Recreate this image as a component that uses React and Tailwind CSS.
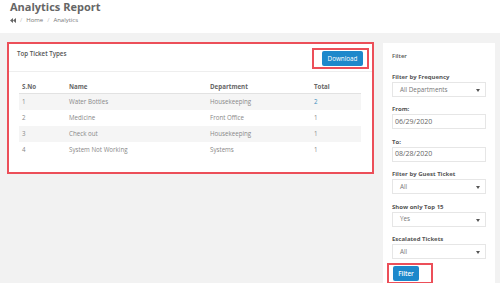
const rows = [
  { no: 1, name: "Water Bottles", dept: "Housekeeping", total: 2, link: true },
  { no: 2, name: "Medicine", dept: "Front Office", total: 1 },
  { no: 3, name: "Check out", dept: "Housekeeping", total: 1 },
  { no: 4, name: "System Not Working", dept: "Systems", total: 1 },
];

const cols = "grid grid-cols-[47px_141px_104px_50px]";

const Caret = () => (
  <svg width="4" height="3" viewBox="0 0 4 3" className="absolute right-[5px] top-[6px]">
    <path d="M0 0h4L2 3z" fill="#555" />
  </svg>
);

const Field = ({ label, value, select }) => (
  <div className="flex flex-col">
    <label className="text-[6px] font-bold leading-[8px] text-[#555] mb-[1px]">{label}</label>
    <div className="relative h-[15px] border border-[#e6e6e6] bg-white flex items-center">
      <span
        className={
          select
            ? "pl-[7px] text-[6.3px] text-[#777]"
            : "pl-[2px] text-[7px] text-[#666]"
        }
      >
        {value}
      </span>
      {select && <Caret />}
    </div>
  </div>
);

export default function App() {
  return (
    <div className="w-[500px] h-[283px] overflow-hidden bg-[#f2f2f2] font-['Open_Sans',sans-serif]">
      <header className="h-[33px] bg-white pl-[10px]">
        <h1 className="text-[11px] font-bold leading-[13px] text-[#666]">Analytics Report</h1>
        <div className="mt-[3px] flex items-center text-[6px] leading-[8px] text-[#777]">
          <svg width="6" height="5" viewBox="0 0 6 5">
            <path d="M0 2.5L3 0v5zM3 2.5L6 0v5z" fill="#666" />
          </svg>
          <span className="ml-[4px] text-[#bbb]">/</span>
          <span className="ml-[4px]">Home</span>
          <span className="ml-[4px] text-[#bbb]">/</span>
          <span className="ml-[4px]">Analytics</span>
        </div>
      </header>

      <div className="flex items-start pl-[7px] gap-[9px]">
        <section className="mt-[9px] w-[367px] h-[132px] bg-white border-2 border-[#ec4f59]">
          <div className="h-[28px] flex items-start justify-between border-b border-[#eeeeee] pl-[8px] pr-[3px]">
            <h2 className="pt-[6px] text-[6.2px] font-semibold leading-[8px] text-[#555]">Top Ticket Types</h2>
            <div className="mt-[4px] flex border-2 border-[#ec4f59] pl-[8px] pr-[4px] py-[1px]">
              <button className="h-[15px] w-[41px] rounded-[2px] bg-[#1d88cb] text-[6.3px] text-white leading-[15px]">
                Download
              </button>
            </div>
          </div>
          <div className="ml-[10px] mt-[8px] w-[342px] text-[6.2px]">
            <div className={`${cols} h-[14px] items-center border-b border-[#e2e2e2] font-bold text-[#666]`}>
              <span className="pl-[3px]">S.No</span>
              <span className="pl-[3px]">Name</span>
              <span className="pl-[3px]">Department</span>
              <span className="pl-[3px]">Total</span>
            </div>
            {rows.map((r) => (
              <div
                key={r.no}
                className={`${cols} h-[16px] items-center text-[#888] ${r.no % 2 ? "bg-[#f5f5f5]" : "bg-white"}`}
              >
                <span className="pl-[3px]">{r.no}</span>
                <span className="pl-[3px]">{r.name}</span>
                <span className="pl-[3px]">{r.dept}</span>
                <span className={`pl-[3px] ${r.link ? "text-[#3c8dbc]" : ""}`}>{r.total}</span>
              </div>
            ))}
          </div>
        </section>

        <aside className="mt-[10px] w-[112px] h-[250px] bg-white px-[9px] pt-[9px]">
          <h3 className="text-[6px] font-semibold leading-[8px] text-[#555]">Filter</h3>
          <div className="mt-[13px] flex flex-col gap-[8.4px]">
            <Field label="Filter by Frequency" value="All Departments" select />
            <Field label="From:" value="06/29/2020" />
            <Field label="To:" value="08/28/2020" />
            <Field label="Filter by Guest Ticket" value="All" select />
            <Field label="Show only Top 15" value="Yes" select />
            <Field label="Escalated Tickets" value="All" select />
          </div>
          <div className="mt-[4px] -ml-[5px] w-[46px] flex border-2 border-[#ec4f59] pl-[4px] pt-[1px] pb-[1px]">
            <button className="h-[15px] w-[26px] rounded-[2px] bg-[#1d88cb] text-[6.3px] font-semibold text-white leading-[15px]">
              Filter
            </button>
          </div>
        </aside>
      </div>
    </div>
  );
}
